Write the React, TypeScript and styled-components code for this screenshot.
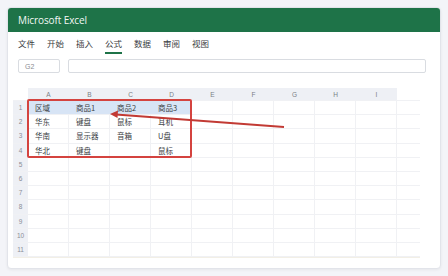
import React from "react";
import styled, { createGlobalStyle } from "styled-components";

const Global = createGlobalStyle`
  html, body { margin: 0; padding: 0; background: #f3f4f8; }
  body { font-family: "Noto Sans", "Noto Sans CJK SC", sans-serif; }
  #root { padding: 7px; }
`;

const Card = styled.div`
  width: 434px;
  height: 262px;
  box-sizing: border-box;
  background: #fff;
  border: 1px solid #e2e4ea;
  border-radius: 4px;
  box-shadow: 0 1px 3px rgba(0,0,0,0.06);
  overflow: hidden;
  display: flex;
  flex-direction: column;
`;

const TitleBar = styled.div`
  height: 24px;
  background: #1e7348;
  color: #f2f7f4;
  font-family: "Open Sans", "Noto Sans", sans-serif;
  font-size: 10px;
  display: flex;
  align-items: center;
  padding-left: 10px;
  letter-spacing: -0.1px;
`;

const Tabs = styled.div`
  display: flex;
  gap: 12px;
  padding-left: 10px;
`;

const Tab = styled.div<{ $active?: boolean }>`
  font-family: "Noto Sans CJK SC", sans-serif;
  font-size: 8.5px;
  line-height: 12px;
  color: #3a3d42;
  padding: 5px 0 3px;
  border-bottom: 2px solid ${(p) => (p.$active ? "#1e7348" : "transparent")};
`;

const FormulaRow = styled.div`
  display: flex;
  gap: 8px;
  padding: 5px 14px 0 10px;
`;

const NameBox = styled.div`
  width: 42px;
  height: 14px;
  box-sizing: border-box;
  border: 1px solid #d9dce1;
  border-radius: 2px;
  font-family: "Liberation Sans", sans-serif;
  font-size: 7px;
  color: #8a8d93;
  display: flex;
  align-items: center;
  padding-left: 6px;
`;

const FormulaBar = styled.div`
  flex: 1;
  height: 14px;
  box-sizing: border-box;
  border: 1px solid #d9dce1;
  border-radius: 2px;
`;

const GridWrap = styled.div`
  position: relative;
  margin: 15px 0 0 5px;
  width: 407px;
  border-bottom: 1px solid #f2efe6;
`;

const Row = styled.div<{ $h: number }>`
  display: flex;
  height: ${(p) => p.$h}px;
  border-bottom: 1px solid #f0f1f4;
  box-sizing: border-box;
`;

const Corner = styled.div`
  width: 15px;
  flex: none;
`;

const ColHead = styled.div`
  width: 41px;
  flex: none;
  background: #eef0f5;
  color: #7b7f87;
  font-family: "Liberation Sans", sans-serif;
  font-size: 6.5px;
  display: flex;
  align-items: center;
  justify-content: center;
`;

const RowHead = styled.div`
  width: 15px;
  flex: none;
  background: #eef0f5;
  color: #8a8e96;
  font-family: "Liberation Sans", sans-serif;
  font-size: 6.5px;
  display: flex;
  align-items: center;
  justify-content: center;
`;

const Cell = styled.div<{ $hl?: boolean }>`
  width: 41px;
  flex: none;
  box-sizing: border-box;
  border-right: 1px solid ${(p) => (p.$hl ? "#d7e4f5" : "#f0f1f4")};
  background: ${(p) => (p.$hl ? "#d7e4f5" : "transparent")};
  font-family: "Noto Sans CJK SC", sans-serif;
  font-size: 7.5px;
  color: #3b3e44;
  display: flex;
  align-items: center;
  padding-left: 7px;
  white-space: nowrap;
`;

const Filler = styled.div`
  flex: 1;
`;

const Highlight = styled.div`
  position: absolute;
  left: 14px;
  top: 11px;
  width: 165px;
  height: 59px;
  box-sizing: border-box;
  border: 2px solid #d4433f;
  border-radius: 2px;
  pointer-events: none;
`;

const Arrow = styled.svg`
  position: absolute;
  left: 0;
  top: 0;
  pointer-events: none;
`;

const cols = ["A", "B", "C", "D", "E", "F", "G", "H", "I"];
const data: string[][] = [
  ["区域", "商品1", "商品2", "商品3"],
  ["华东", "键盘", "鼠标", "耳机"],
  ["华南", "显示器", "音箱", "U盘"],
  ["华北", "键盘", "", "鼠标"],
];
const tabs = ["文件", "开始", "插入", "公式", "数据", "审阅", "视图"];

export default function App() {
  const rows = Array.from({ length: 11 }, (_, i) => i);
  return (
    <>
      <Global />
      <Card>
        <TitleBar>Microsoft Excel</TitleBar>
        <Tabs>
          {tabs.map((t) => (
            <Tab key={t} $active={t === "公式"}>
              {t}
            </Tab>
          ))}
        </Tabs>
        <FormulaRow>
          <NameBox>G2</NameBox>
          <FormulaBar />
        </FormulaRow>
        <GridWrap>
          <Row $h={13}>
            <Corner />
            {cols.map((c) => (
              <ColHead key={c}>{c}</ColHead>
            ))}
            <Filler />
          </Row>
          {rows.map((r) => (
            <Row key={r} $h={14.2}>
              <RowHead>{r + 1}</RowHead>
              {cols.map((c, ci) => (
                <Cell key={c} $hl={r === 0 && ci < 4}>
                  {data[r]?.[ci] ?? ""}
                </Cell>
              ))}
              <Filler />
            </Row>
          ))}
          <Highlight />
          <Arrow width="407" height="170" viewBox="0 0 407 170">
            <line x1="271" y1="39" x2="103" y2="26.5" stroke="#c23a34" strokeWidth="1.8" />
            <polygon points="97,26 105,22.5 104.5,30" fill="#c23a34" />
          </Arrow>
        </GridWrap>
      </Card>
    </>
  );
}
